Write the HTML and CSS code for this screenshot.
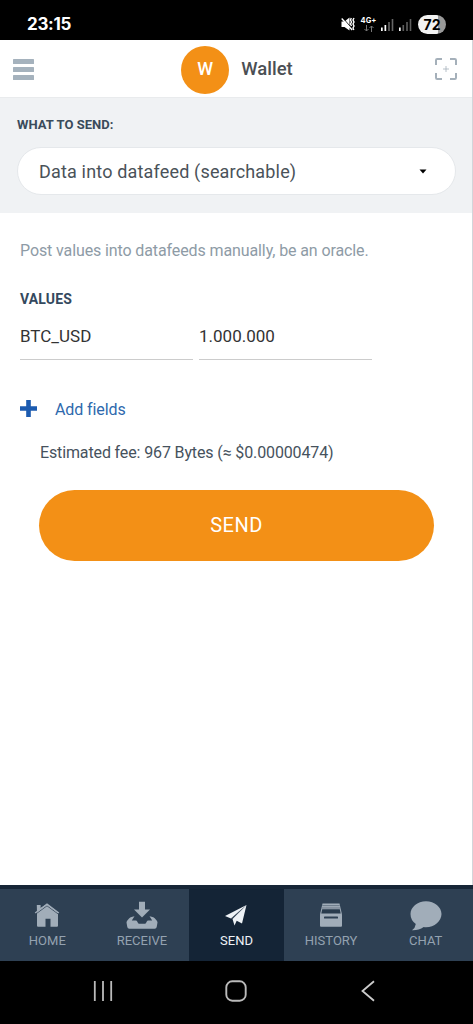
FILE: index.html
```html
<!DOCTYPE html>
<html lang="en">
<head>
<meta charset="utf-8">
<title>Wallet</title>
<link rel="stylesheet" href="styles.css">
</head>
<body>
<div class="phone">
  <div class="status">
    <span class="clock">23:15</span>
    <div class="status-icons">
      <svg class="mute" width="14" height="14" viewBox="0 0 14 14"><path d="M.5 4.500h3L8.500.500v13L3.500 10h-3z" fill="#fff"/><path d="M2.200 1.500l9 10" stroke="#000" stroke-width="1"/><path d="M.7 1.500l10.500 11.500" stroke="#fff" stroke-width="1.400"/><path d="M10.300 1l-.8 2 1 2-1 2 1 2M13 1l-1 2 1 2-1 2 1 2-1 2 .8 2" fill="none" stroke="#fff" stroke-width="1.400"/></svg>
      <div class="network"><span>4G+</span>
        <svg width="10" height="7" viewBox="0 0 10 7" fill="none" stroke="#777" stroke-width="1"><path d="M2.500 0v6M.5 4l2 2 2-2M7.500 7V1M5.500 3l2-2 2 2"/></svg>
      </div>
      <svg class="signal" width="13" height="13" viewBox="0 0 13 13"><path d="M0 9.500h1.700V13H0zM3.500 7h1.700v6H3.500z" fill="#fff"/><path d="M7.200 4h1.600v9H7.200zM10.700 1h1.600v12h-1.600z" fill="#666"/></svg>
      <svg class="signal second" width="13" height="13" viewBox="0 0 13 13"><path d="M0 9.500h1.700V13H0z" fill="#fff"/><path d="M3.500 7h1.600v6H3.500zM7.200 4h1.600v9H7.200zM10.700 1h1.600v12h-1.600z" fill="#5e5e5e"/></svg>
      <span class="battery">72</span>
    </div>
  </div>

  <div class="app">
    <header class="header">
      <svg width="21" height="21" viewBox="0 0 21 21" fill="#a5b2bd"><rect width="21" height="5" rx=".6"/><rect y="8" width="21" height="5" rx=".6"/><rect y="16" width="21" height="5" rx=".6"/></svg>
      <div class="account"><span class="avatar">W</span><span class="account-name">Wallet</span></div>
      <svg width="22" height="22" viewBox="0 0 22 22" fill="none" stroke="#a5b0ba"><path d="M1 7V2.200Q1 1 2.200 1H7M15 1h4.800Q21 1 21 2.200V7M21 15v4.800q0 1.200-1.200 1.200H15M7 21H2.200Q1 21 1 19.800V15" stroke-width="2"/><path d="M11 8v6M8 11h6" stroke-width=".8"/></svg>
    </header>

    <section class="kind">
      <div class="kind-label">WHAT TO SEND:</div>
      <div class="select"><span>Data into datafeed (searchable)</span>
        <svg width="8" height="5" viewBox="0 0 8 5"><path d="M.5.500h7L4 4.500z"/></svg>
      </div>
    </section>

    <main class="content">
      <p class="hint">Post values into datafeeds manually, be an oracle.</p>
      <h2 class="values-title">VALUES</h2>
      <div class="fields"><div class="field">BTC_USD</div><div class="field">1.000.000</div></div>
      <div class="add"><svg width="17" height="17" viewBox="0 0 17 17"><path d="M6.200 0h4.600v6.200H17v4.600h-6.200V17H6.200v-6.200H0V6.200h6.200z" fill="#1c5bb0"/></svg><span>Add fields</span></div>
      <div class="fee">Estimated fee: 967 Bytes (≈ $0.00000474)</div>
      <div class="send">SEND</div>
    </main>
  </div>

  <nav class="tabs">
    <div class="tab">
      <svg width="34" height="32" viewBox="0 0 34 32"><path d="M6.800 4h3.800v3L17 3l11 8.200v13.600q0 1-1 1h-6.500v-8h-5v8H8q-1 0-1-1V12z" fill="#a1adb9"/><path d="M5.500 13.200L17 4.800 28.500 13.200" fill="none" stroke="#2e4053" stroke-width=".8"/><path d="M5.200 12L17 3.200 28.800 12" fill="none" stroke="#a1adb9" stroke-width="1.500"/></svg>
      <span>HOME</span>
    </div>
    <div class="tab">
      <svg width="34" height="32" viewBox="0 0 34 32" fill="#a1adb9"><path d="M14 .7h6v7.800h5L17 16.500 9 8.500h5z"/><path d="M9.500 15.200L6.800 19.600h4q1 0 1.400.9l.8 1.600q.3.600 1 .6h6q.7 0 1-.6l.8-1.600q.4-.9 1.400-.9h4L24.500 15.200q4.500.6 6.300 3.300 1.700 1.500 1.700 3l-.8 4.500q-.3 1.800-2 1.800H4.300q-1.700 0-2-1.800l-.8-4.500q0-1.500 1.700-3 1.800-2.700 6.300-3.300z"/></svg>
      <span>RECEIVE</span>
    </div>
    <div class="tab active">
      <svg width="34" height="32" viewBox="0 0 34 32"><path d="M27.500 4L6 15l6 2.500zM27.500 4L13.500 18l2 6.500 2.200-4.700 5.300 2.700z" fill="#eef2f6"/><path d="M27.500 4L12 17.500l1 .3z" fill="#667380"/></svg>
      <span>SEND</span>
    </div>
    <div class="tab">
      <svg width="34" height="32" viewBox="0 0 34 32"><path d="M8.500 2.500h17l2.500 11v11.300q0 1-1 1H7q-1 0-1-1V13.500z" fill="#a1adb9"/><path d="M8.300 4.600h17.400M8 7h18" stroke="#536374" stroke-width=".7"/><path d="M8.200 8.200h17.600l.9 4.300H7.300z" fill="#293b4d"/><rect x="10" y="15.600" width="14" height="2" rx=".6" fill="#2e4053"/></svg>
      <span>HISTORY</span>
    </div>
    <div class="tab">
      <svg width="34" height="32" viewBox="0 0 34 32"><path d="M17 .200C25.500.200 32.500 6 32.500 13S25.500 26.300 17 26.300q-1.200 0-2.300-.2Q9.500 29.600 3 29.300q3.200-2 3.800-6.200Q1.500 19 1.500 13C1.500 6 8.500.200 17 .200z" fill="#a1adb9"/></svg>
      <span>CHAT</span>
    </div>
  </nav>

  <div class="system">
    <svg width="20" height="22" viewBox="0 0 20 22" stroke="#bbb" stroke-width="1.800"><path d="M1.800 1v20M10 1v20M18.200 1v20"/></svg>
    <svg width="22" height="22" viewBox="0 0 22 22" fill="none" stroke="#bbb" stroke-width="1.900"><rect x="1.300" y="1.300" width="19.400" height="19.400" rx="6"/></svg>
    <svg width="14" height="22" viewBox="0 0 14 22" fill="none" stroke="#ccc" stroke-width="1.800"><path d="M13 1.200L1.500 11 13 20.800"/></svg>
  </div>
</div>
</body>
</html>
```
FILE: styles.css
```css
* { box-sizing: border-box; }
body { margin: 0; font-family: Roboto, "Liberation Sans", sans-serif; background: #fff; }
svg { display: block; flex: none; }
.phone { width: 473px; height: 1024px; display: flex; flex-direction: column; overflow: hidden; }

.status { height: 40px; flex: none; background: #000; color: #fff; display: flex; justify-content: space-between; align-items: center; padding: 8px 27px 0; }
.clock { font: 700 17px/22px Inter, sans-serif; letter-spacing: -.3px; }
.status-icons { display: flex; align-items: center; }
.network { width: 15px; margin: 0 5px 0 6px; display: flex; flex-direction: column; align-items: center; font: 700 7.500px/8px Inter, sans-serif; }
.signal.second { margin: 0 6px 0 5px; }
.battery { width: 28px; height: 19px; border-radius: 10px; background: linear-gradient(90deg, #f2f2f2 72%, #999 72%); color: #000; font: 700 14px/19px Inter, sans-serif; text-align: center; }

.app { flex: 1; border-right: 1px solid #d3d5da; display: flex; flex-direction: column; }
.header { height: 58px; flex: none; border-bottom: 1px solid #e9ebed; display: flex; align-items: center; justify-content: space-between; padding: 1px 15px 0 13px; }
.account { display: flex; align-items: center; gap: 12px; margin-left: 5px; padding-top: 1px; }
.avatar { width: 48px; height: 48px; border-radius: 50%; background: #f39016; color: #fff; font: 500 18px/46px Roboto, sans-serif; text-align: center; }
.account-name { color: #4b4f54; font-size: 18.500px; font-weight: 500; letter-spacing: 0; padding-bottom: 2px; }

.kind { height: 115px; flex: none; background: #f0f2f4; padding: 18px 16px 0 17px; }
.kind-label { color: #3a4b5b; font-size: 13px; line-height: 17px; font-weight: 700; letter-spacing: .05px; }
.select { height: 48px; margin-top: 14px; border: 1px solid #e5e8eb; border-radius: 24px; background: #fff; color: #4a5259; display: flex; align-items: center; justify-content: space-between; padding: 0 28px 0 21px; font-size: 18px; letter-spacing: .17px; }

.content { padding: 27px 38px 0 20px; }
.hint { margin: 0; color: #8e9ba6; font-size: 16px; line-height: 22px; letter-spacing: -.11px; }
.values-title { margin: 27px 0 0; color: #34495e; font-size: 14px; line-height: 20px; font-weight: 700; letter-spacing: .15px; }
.fields { display: flex; gap: 6px; margin-top: 14px; }
.field { width: 173px; height: 37px; border-bottom: 1px solid #ccc; color: #333; font-size: 17px; line-height: 26px; }
.add { display: flex; align-items: center; gap: 18px; margin-top: 38px; color: #2e69ad; font-size: 16px; line-height: 22px; letter-spacing: -.1px; }
.add svg { margin-top: -2px; }
.add span { padding-top: 1px; }
.fee { margin: 21px 0 0 20px; color: #46525d; font-size: 16px; line-height: 22px; letter-spacing: -.13px; }
.send { height: 71px; margin: 26px 0 0 19px; border-radius: 36px; background: #f39016; color: #fff; font-size: 20px; line-height: 70px; text-align: center; letter-spacing: .5px; }

.tabs { height: 76px; flex: none; border-top: 4px solid #172637; display: grid; grid-template-columns: repeat(5, 1fr); background: #2e4053; }
.tab { display: flex; flex-direction: column; align-items: center; padding-top: 12px; color: #94a2b0; font-size: 13px; line-height: 16px; }
.tab.active { background: #142436; color: #eef2f6; }

.system { height: 63px; flex: none; background: #000; display: grid; grid-template-columns: 20px 22px 14px; column-gap: 112px; align-content: start; padding: 19px 0 0 93px; }
.system svg:last-child { margin-left: 2px; }
```
